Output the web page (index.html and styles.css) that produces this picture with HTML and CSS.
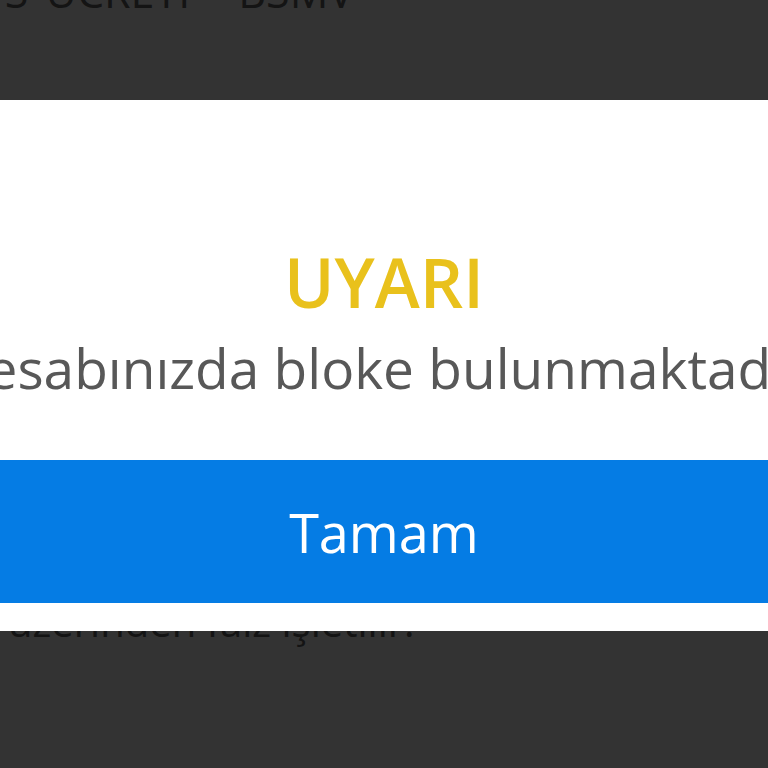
FILE: index.html
```html
<!DOCTYPE html>
<html lang="tr">
<head>
<meta charset="utf-8">
<title>Uyarı</title>
<link rel="stylesheet" href="styles.css">
</head>
<body>
<div class="page">
  <div class="behind behind-top">
    <p class="behind-text top-text">MASRAF VE KOMİSYONLAR S ÜCRETİ - BSMV</p>
  </div>
  <div class="dialog" role="alertdialog">
    <h1 class="dialog-title">UYARI</h1>
    <div class="message-row">
      <p class="dialog-message">Hesabınızda bloke bulunmaktadır.</p>
    </div>
    <button class="dialog-button" type="button">Tamam</button>
  </div>
  <div class="behind behind-bottom">
    <p class="behind-text bottom-text">üzerinden faiz işletilir.</p>
  </div>
</div>
</body>
</html>
```

FILE: styles.css
```css
html, body {
  margin: 0;
  padding: 0;
  background: #333333;
}

.page {
  width: 768px;
  height: 768px;
  display: flex;
  flex-direction: column;
  overflow: hidden;
  font-family: "Open Sans", "Noto Sans", sans-serif;
}

.behind {
  overflow: hidden;
  flex: none;
}

.behind-top {
  height: 100px;
  display: flex;
  justify-content: flex-end;
}

.behind-text {
  margin: 0;
  white-space: nowrap;
  color: #141414;
}

.top-text {
  font-size: 43px;
  line-height: 43px;
  margin-top: -30px;
  margin-right: 414px;
  word-spacing: 6px;
}

.behind-bottom {
  flex: 1;
  padding-left: 8px;
}

.bottom-text {
  font-size: 40px;
  line-height: 40px;
  margin-top: -29px;
}

.dialog {
  flex: none;
  height: 531px;
  box-sizing: border-box;
  background: #ffffff;
  padding: 142px 0 28px;
  display: flex;
  flex-direction: column;
}

.dialog-title {
  margin: 0 0 11px;
  text-align: center;
  font-size: 68px;
  line-height: 80px;
  font-weight: 600;
  color: #e9c11c;
}

.message-row {
  display: flex;
  justify-content: center;
  overflow: hidden;
  margin-bottom: 57px;
}

.dialog-message {
  margin: 0;
  flex: none;
  white-space: nowrap;
  font-size: 55px;
  line-height: 70px;
  color: #585858;
}

.dialog-button {
  height: 143px;
  border: 0;
  margin: 0;
  padding: 0;
  background: #057ce4;
  color: #ffffff;
  font-family: inherit;
  font-size: 54px;
  line-height: 70px;
  font-weight: 400;
  display: flex;
  align-items: center;
  justify-content: center;
}
```
